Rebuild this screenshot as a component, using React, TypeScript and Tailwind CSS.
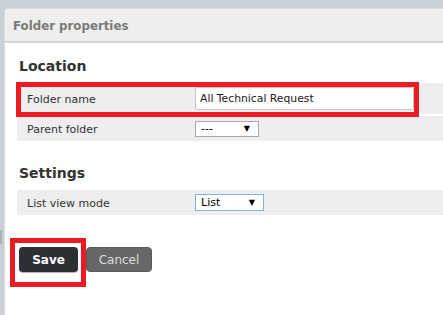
import React from 'react';

const font = "font-['DejaVu_Sans',Verdana,sans-serif]";

function Row({ label, children, tall }: { label: string; children: React.ReactNode; tall?: boolean }) {
  return (
    <div className={`flex items-center bg-[#eeeeee] ${tall ? 'h-[31px]' : 'h-[25px]'}`}>
      <div className="w-[178px] pl-[10px] pt-[3px] text-[11px] text-[#333333]">{label}</div>
      {children}
    </div>
  );
}

function Select({ value, width, focused }: { value: string; width: string; focused?: boolean }) {
  return (
    <div
      className={`flex items-center justify-between bg-white pl-[5px] pr-[8px] pt-[1px] text-[11px] text-black border ${width} ${
        focused ? 'h-[17px] border-[#7eb4ea]' : 'h-[16px] border-[#a9a9a9]'
      }`}
    >
      <span>{value}</span>
      <span className="text-[8px] leading-none">▼</span>
    </div>
  );
}

export default function App() {
  return (
    <div className={`relative w-[443px] h-[315px] overflow-hidden bg-[#c8d0d8] pt-[8px] pl-[4px] ${font}`}>
      {/* scroll thumb hint on the left edge */}
      <div className="absolute left-0 top-[230px] w-[2px] h-[14px] bg-[#a9b1b9]" />

      <div className="h-full bg-white rounded-tl-[4px] border-l border-t border-[#d9dde1] overflow-hidden">
        <div className="h-[34px] bg-[#eeeeee] border-b-2 border-[#d4d4d4] flex items-center pl-[8px] pt-[3px] text-[11.8px] font-bold text-[#7a7a7a]">
          Folder properties
        </div>

        <div className="pl-[12px]">
          <h2 className="mt-[13px] h-[20px] leading-[20px] pl-[2px] text-[14px] font-bold text-[#333333]">Location</h2>

          <div className="mt-[7px] flex flex-col gap-[2px]">
            <Row label="Folder name" tall>
              <div className="w-[219px] h-[23px] flex items-center pl-[4px] pt-[1px] bg-white border border-[#c4c4c4] rounded-[2px] text-[10.8px] text-[#222222]">
                All Technical Request
              </div>
            </Row>
            <Row label="Parent folder">
              <Select value="---" width="w-[64px]" />
            </Row>
          </div>

          <h2 className="mt-[22px] h-[20px] leading-[20px] pl-[2px] text-[14px] font-bold text-[#333333]">Settings</h2>

          <div className="mt-[7px]">
            <Row label="List view mode">
              <Select value="List" width="w-[69px]" focused />
            </Row>
          </div>

          <div className="mt-[32px] flex gap-[8px] pl-[2px]">
            <button className="w-[59px] h-[25px] pt-[1px] rounded-[4px] bg-[#2c2f34] text-white text-[12px] font-bold shadow-[0_1px_1px_rgba(0,0,0,0.3)]">
              Save
            </button>
            <button className="w-[66px] h-[25px] pt-[1px] rounded-[4px] bg-[#676767] border border-[#555b60] text-[#dddddd] text-[12px]">
              Cancel
            </button>
          </div>
        </div>
      </div>

      {/* annotation boxes */}
      <div className="absolute left-[16px] top-[82px] w-[403px] h-[35px] border-[5px] border-[#ed1c24]" />
      <div className="absolute left-[10px] top-[238px] w-[76px] h-[49px] border-[5px] border-[#ed1c24]" />
    </div>
  );
}
